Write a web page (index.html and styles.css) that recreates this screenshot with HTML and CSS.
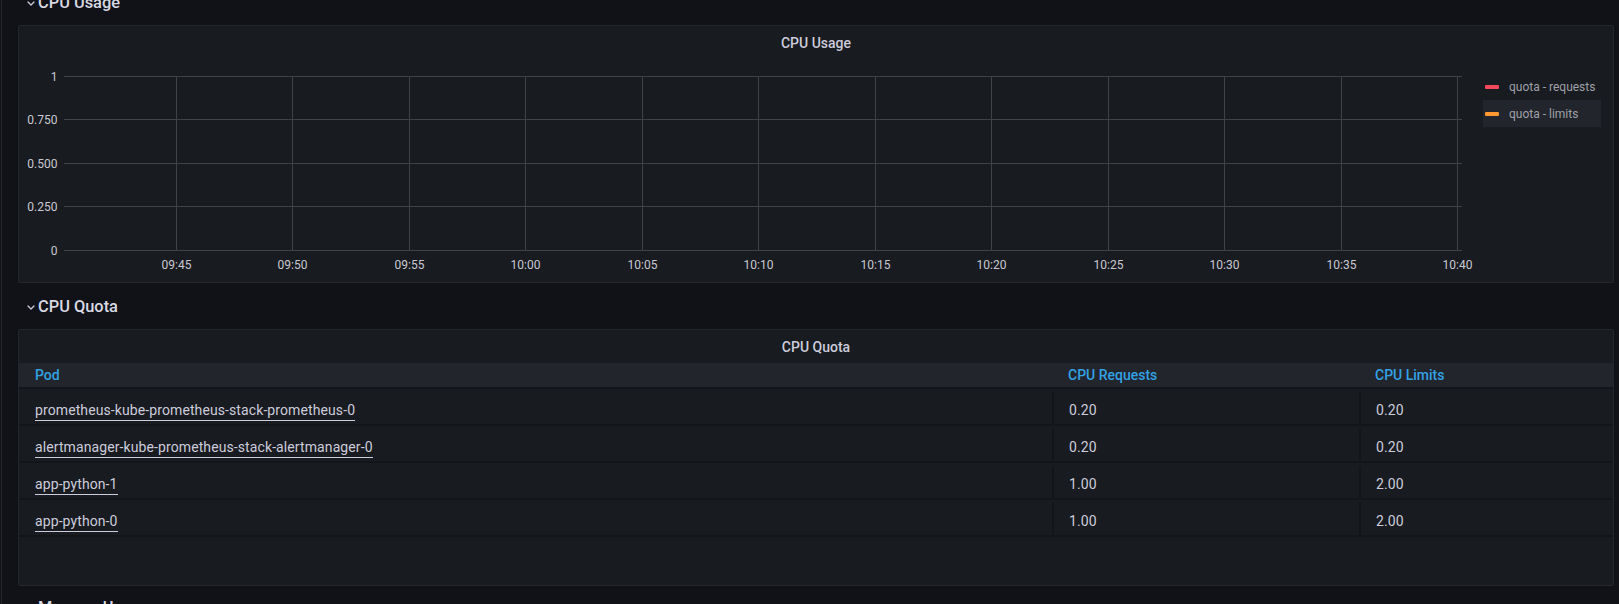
FILE: index.html
```html
<!DOCTYPE html>
<html lang="en">
<head>
<meta charset="utf-8">
<title>Kubernetes / Compute Resources</title>
<link rel="stylesheet" href="styles.css">
</head>
<body>
<div class="page">
  <div class="row-header row-header--first">
    <svg class="chevron" width="8" height="5" viewBox="0 0 8 5"><path d="M1 1 L4 4 L7 1" fill="none" stroke="#ccccdc" stroke-width="1.3" stroke-linecap="round" stroke-linejoin="round"/></svg>
    <span class="row-title">CPU Usage</span>
  </div>

  <section class="panel">
    <div class="panel-title">CPU Usage</div>
    <div class="graph-body">
      <svg class="graph" width="1456" height="223" viewBox="0 0 1456 223">
        <g class="grid">
          <line x1="45" y1="17.5" x2="1443" y2="17.5"/>
          <line x1="45" y1="60.5" x2="1443" y2="60.5"/>
          <line x1="45" y1="104.5" x2="1443" y2="104.5"/>
          <line x1="45" y1="147.5" x2="1443" y2="147.5"/>
          <line x1="45" y1="191.5" x2="1443" y2="191.5"/>
          <line x1="157.5" y1="17.5" x2="157.5" y2="191.5"/>
          <line x1="273.5" y1="17.5" x2="273.5" y2="191.5"/>
          <line x1="390.5" y1="17.5" x2="390.5" y2="191.5"/>
          <line x1="506.5" y1="17.5" x2="506.5" y2="191.5"/>
          <line x1="623.5" y1="17.5" x2="623.5" y2="191.5"/>
          <line x1="739.5" y1="17.5" x2="739.5" y2="191.5"/>
          <line x1="856.5" y1="17.5" x2="856.5" y2="191.5"/>
          <line x1="972.5" y1="17.5" x2="972.5" y2="191.5"/>
          <line x1="1089.5" y1="17.5" x2="1089.5" y2="191.5"/>
          <line x1="1205.5" y1="17.5" x2="1205.5" y2="191.5"/>
          <line x1="1322.5" y1="17.5" x2="1322.5" y2="191.5"/>
          <line x1="1438.5" y1="17.5" x2="1438.5" y2="191.5"/>
        </g>
        <g class="y-labels">
          <text x="38.5" y="21.5">1</text>
          <text x="38.5" y="64.5">0.750</text>
          <text x="38.5" y="108.5">0.500</text>
          <text x="38.5" y="151.5">0.250</text>
          <text x="38.5" y="195.5">0</text>
        </g>
        <g class="x-labels">
          <text x="157.5" y="209.5">09:45</text>
          <text x="273.5" y="209.5">09:50</text>
          <text x="390.5" y="209.5">09:55</text>
          <text x="506.5" y="209.5">10:00</text>
          <text x="623.5" y="209.5">10:05</text>
          <text x="739.5" y="209.5">10:10</text>
          <text x="856.5" y="209.5">10:15</text>
          <text x="972.5" y="209.5">10:20</text>
          <text x="1089.5" y="209.5">10:25</text>
          <text x="1205.5" y="209.5">10:30</text>
          <text x="1322.5" y="209.5">10:35</text>
          <text x="1438.5" y="209.5">10:40</text>
        </g>
      </svg>
      <ul class="legend">
        <li class="legend-item"><span class="swatch swatch--red"></span>quota - requests</li>
        <li class="legend-item legend-item--hover"><span class="swatch swatch--orange"></span>quota - limits</li>
      </ul>
    </div>
  </section>

  <div class="row-header">
    <svg class="chevron" width="8" height="5" viewBox="0 0 8 5"><path d="M1 1 L4 4 L7 1" fill="none" stroke="#ccccdc" stroke-width="1.3" stroke-linecap="round" stroke-linejoin="round"/></svg>
    <span class="row-title">CPU Quota</span>
  </div>

  <section class="panel panel--table">
    <div class="panel-title">CPU Quota</div>
    <div class="table">
      <div class="thead">
        <div class="th">Pod</div>
        <div class="th">CPU Requests</div>
        <div class="th">CPU Limits</div>
      </div>
      <div class="tr">
        <div class="td"><span class="link">prometheus-kube-prometheus-stack-prometheus-0</span></div>
        <div class="td td--sep">0.20</div>
        <div class="td td--sep">0.20</div>
      </div>
      <div class="tr">
        <div class="td"><span class="link">alertmanager-kube-prometheus-stack-alertmanager-0</span></div>
        <div class="td td--sep">0.20</div>
        <div class="td td--sep">0.20</div>
      </div>
      <div class="tr">
        <div class="td"><span class="link">app-python-1</span></div>
        <div class="td td--sep">1.00</div>
        <div class="td td--sep">2.00</div>
      </div>
      <div class="tr">
        <div class="td"><span class="link">app-python-0</span></div>
        <div class="td td--sep">1.00</div>
        <div class="td td--sep">2.00</div>
      </div>
    </div>
  </section>

  <div class="row-header row-header--last">
    <svg class="chevron" width="8" height="5" viewBox="0 0 8 5"><path d="M1 1 L4 4 L7 1" fill="none" stroke="#ccccdc" stroke-width="1.3" stroke-linecap="round" stroke-linejoin="round"/></svg>
    <span class="row-title">Memory Usage</span>
  </div>
</div>
</body>
</html>
```

FILE: styles.css
```css
* { box-sizing: border-box; }

html, body {
  margin: 0;
  padding: 0;
  background: #111217;
  height: 604px;
  overflow: hidden;
}

body {
  font-family: Roboto, "Liberation Sans", sans-serif;
  color: #ccccdc;
}

.page {
  margin-left: 1px;
  border-left: 1px solid #24262b;
  padding: 0 5px 0 16px;
  min-height: 604px;
}

.row-header {
  height: 46px;
  display: flex;
  align-items: center;
  padding-left: 9px;
  gap: 3px;
}

.row-header--first {
  margin-top: -21px;
}

.row-header--last {
  margin-top: -2px;
}

.chevron {
  flex: none;
  margin-top: 2px;
}

.row-title {
  font-size: 16.4px;
  font-weight: 500;
  color: #d8d9e3;
}

.panel {
  height: 258px;
  background: #181b1f;
  border: 1px solid #24262b;
  border-radius: 2px;
  display: flex;
  flex-direction: column;
  overflow: hidden;
}

.panel--table {
  height: 257px;
}

.panel-title {
  height: 33px;
  flex: none;
  display: flex;
  align-items: center;
  justify-content: center;
  font-size: 14px;
  font-weight: 500;
  color: #ccccdc;
}

.graph-body {
  display: flex;
  flex: 1;
}

.graph {
  flex: none;
  display: block;
}

.grid line {
  stroke: #404248;
  stroke-width: 1;
  shape-rendering: crispEdges;
}

.y-labels text {
  font-family: Roboto, "Liberation Sans", sans-serif;
  font-size: 12px;
  fill: #c8c9d2;
  text-anchor: end;
}

.x-labels text {
  font-family: Roboto, "Liberation Sans", sans-serif;
  font-size: 12px;
  fill: #c8c9d2;
  text-anchor: middle;
}

.legend {
  list-style: none;
  margin: 14px 0 0 8px;
  padding: 0;
  width: 118px;
  flex: none;
}

.legend-item {
  height: 27px;
  display: flex;
  align-items: center;
  padding-left: 2px;
  gap: 10px;
  font-size: 12px;
  color: #9fa0a8;
  white-space: nowrap;
}

.legend-item--hover {
  background: #22252b;
}

.swatch {
  width: 14px;
  height: 4px;
  border-radius: 1px;
  flex: none;
}

.swatch--red { background: #f2495c; }
.swatch--orange { background: #ff9830; }

.table {
  flex: 1;
  display: flex;
  flex-direction: column;
}

.thead,
.tr {
  display: grid;
  grid-template-columns: 1033px 307px 1fr;
}

.thead {
  height: 26px;
  background: #22252b;
  border-bottom: 2px solid #131519;
}

.th {
  padding-left: 16px;
  display: flex;
  align-items: center;
  font-size: 14px;
  font-weight: 500;
  color: #33a2e5;
}

.tr {
  height: 37px;
  border-bottom: 2px solid #131519;
}

.td {
  padding: 10px 0 0 16px;
  display: flex;
  align-items: center;
  font-size: 14px;
  letter-spacing: 0.1px;
  color: #ccccdc;
}

.td--sep {
  border-left: 2px solid #131519;
  padding: 3px 0 0 15px;
  margin-top: 3px;
}

.link {
  border-bottom: 1px solid #ccccdc;
  padding-bottom: 2px;
  line-height: 16px;
}
```
